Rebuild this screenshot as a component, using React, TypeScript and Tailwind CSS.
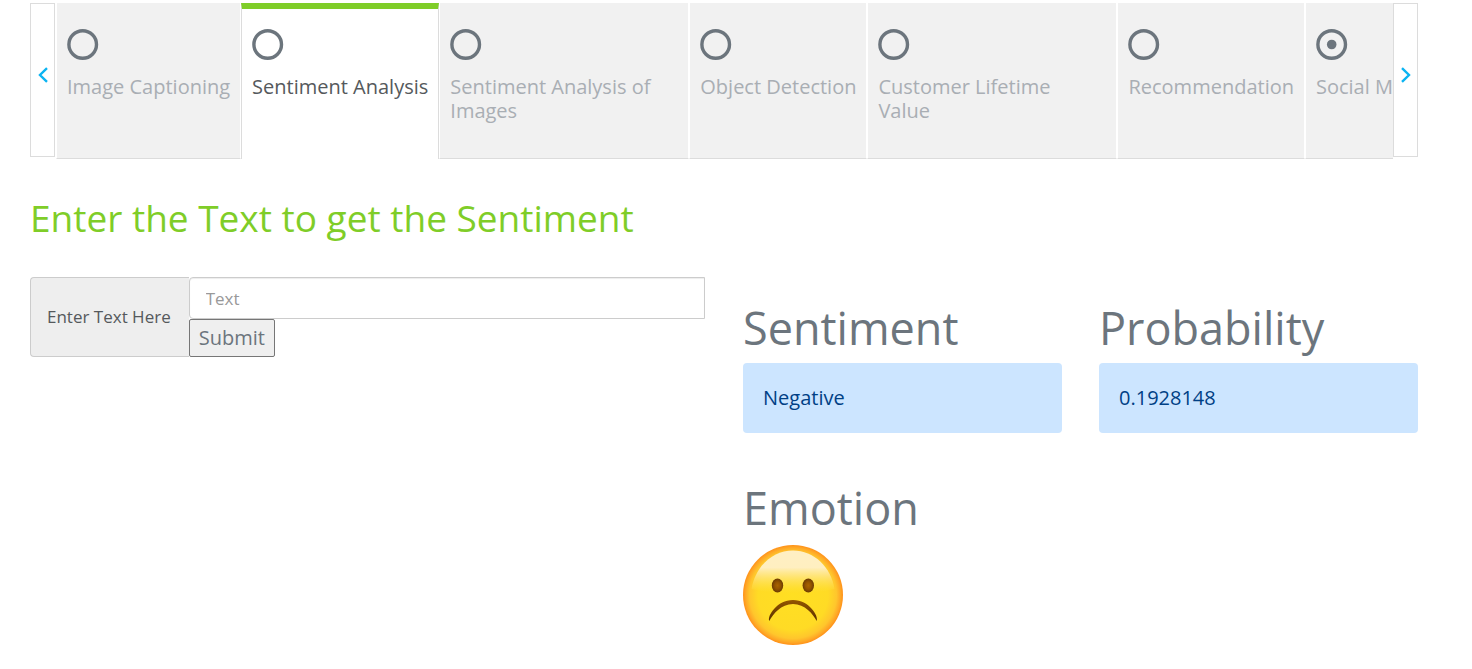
import { useState, type FormEvent } from "react";

type Tab = { label: string; dotted?: boolean };

const TABS: Tab[] = [
  { label: "Image Captioning" },
  { label: "Sentiment Analysis" },
  { label: "Sentiment Analysis of Images" },
  { label: "Object Detection" },
  { label: "Customer Lifetime Value" },
  { label: "Recommendation" },
  { label: "Social Media", dotted: true },
];

function TabIcon({ dotted }: { dotted?: boolean }) {
  return (
    <svg viewBox="0 0 32 32" className="size-8 shrink-0 text-[#6c757d]" aria-hidden="true">
      <circle cx="15.700" cy="16.500" r="13.800" fill="none" stroke="currentColor" strokeWidth="3.400" />
      {dotted && <circle cx="15.700" cy="16.500" r="4.800" fill="currentColor" />}
    </svg>
  );
}

function ScrollButton({ direction }: { direction: "left" | "right" }) {
  return (
    <button
      type="button"
      aria-label={direction === "left" ? "Previous tabs" : "Next tabs"}
      className="flex h-[154px] w-[25px] shrink-0 items-center justify-center border border-[#dcdcdc] bg-white pb-[10px] text-[#0cb4f2]"
    >
      <svg viewBox="0 0 10 16" className="h-4 w-[10px]" fill="none" stroke="currentColor" strokeWidth="2.400" aria-hidden="true">
        <path d={direction === "left" ? "M9 1.200 2 8l7 6.800" : "M1 1.200 8 8l-7 6.800"} />
      </svg>
    </button>
  );
}

function SadFace() {
  return (
    <svg viewBox="0 0 100 100" className="size-[100px]" role="img" aria-label="Sad face">
      <defs>
        <radialGradient id="skin" cx="50%" cy="50%" r="50%">
          <stop offset="0" stopColor="#ffdf22" />
          <stop offset="0.7" stopColor="#ffdb25" />
          <stop offset="0.87" stopColor="#ffc62c" />
          <stop offset="0.95" stopColor="#ffa826" />
          <stop offset="1" stopColor="#ff9119" />
        </radialGradient>
        <linearGradient id="shine" x1="0" y1="0" x2="0" y2="1">
          <stop offset="0" stopColor="#ffefc4" />
          <stop offset="0.4" stopColor="#ffefc0" />
          <stop offset="0.6" stopColor="#ffe78c" stopOpacity="0.8" />
          <stop offset="0.85" stopColor="#ffe04a" stopOpacity="0.5" />
          <stop offset="1" stopColor="#ffdc28" stopOpacity="0.1" />
        </linearGradient>
        <radialGradient id="eye">
          <stop offset="0" stopColor="#a96400" />
          <stop offset="0.5" stopColor="#945400" />
          <stop offset="1" stopColor="#6b3b03" />
        </radialGradient>
        <linearGradient id="mouth" x1="0" y1="0" x2="0" y2="1">
          <stop offset="0" stopColor="#935500" />
          <stop offset="1" stopColor="#5a3000" />
        </linearGradient>
      </defs>
      <circle cx="50" cy="50" r="50" fill="url(#skin)" />
      <path d="M50 5.500C29 5.500 12 22 8.500 44 22 47 36 48 50 48s28-1 41.500-4C88 22 71 5.500 50 5.500Z" fill="url(#shine)" />
      <ellipse cx="34.500" cy="40.500" rx="5.700" ry="7" fill="url(#eye)" />
      <ellipse cx="65.300" cy="40.500" rx="5.700" ry="7" fill="url(#eye)" />
      <path d="M26.300 76C24 71 34 55 50 55s26 16 23.700 21C70 69 62 59 50 59S30 69 26.300 76Z" fill="url(#mouth)" />
    </svg>
  );
}

function Result({ title, value }: { title: string; value: string }) {
  return (
    <section>
      <h2 className="text-[45px] leading-[54px] text-[#6c757d]">{title}</h2>
      <p className="mt-2 rounded bg-[#cce5ff] px-5 py-5 text-xl leading-[30px] text-[#004085]">{value}</p>
    </section>
  );
}

export default function App() {
  const [active, setActive] = useState(1);
  const [text, setText] = useState("");
  const submit = (event: FormEvent) => event.preventDefault();

  return (
    <main className="bg-white pt-[3px] pr-[54px] pl-[30px] font-['Open_Sans',sans-serif]">
      <nav className="flex items-start" aria-label="Models">
        <ScrollButton direction="left" />
        <div role="tablist" className="flex h-[156px] min-w-0 flex-1 overflow-hidden pl-px">
          {TABS.map((tab, index) => (
            <button
              key={tab.label}
              type="button"
              role="tab"
              aria-selected={index === active}
              onClick={() => setActive(index)}
              className={
                index === active
                  ? "flex max-w-[250px] shrink-0 flex-col items-start border-x border-t-6 border-x-[#dcdcdc] border-t-[#7fcd28] bg-white px-[10px] pt-[19px] text-left text-xl leading-6 text-[#55595c]"
                  : "flex max-w-[250px] shrink-0 flex-col items-start border-x border-b border-x-white border-b-[#dcdcdc] bg-[#f1f1f1] px-[10px] pt-[25px] text-left text-xl leading-6 text-[#a9aeb4]"
              }
            >
              <TabIcon dotted={tab.dotted} />
              <span className="mt-[15px]">{tab.label}</span>
            </button>
          ))}
        </div>
        <ScrollButton direction="right" />
      </nav>

      <h1 className="mt-[34px] text-[37px] leading-[50px] text-[#7fcd28]">Enter the Text to get the Sentiment</h1>

      <div className="mt-[34px] grid grid-cols-[675fr_675fr] gap-[38px]">
        <form onSubmit={submit} className="flex items-stretch self-start">
          <label
            htmlFor="sentiment-text"
            className="flex shrink-0 items-center rounded-l border border-r-0 border-[#ccc] bg-[#eee] pr-[18px] pl-4 text-[17px] text-[#55595c]"
          >
            Enter Text Here
          </label>
          <div className="flex min-w-0 flex-1 flex-col items-start">
            <input
              id="sentiment-text"
              type="text"
              placeholder="Text"
              value={text}
              onChange={(event) => setText(event.target.value)}
              className="h-[42px] w-full rounded-l border border-[#ccc] bg-white px-4 text-[17px] text-[#55595c] shadow-[inset_0_1px_1px_rgba(0,0,0,0.075)] placeholder:text-[#999]"
            />
            <button
              type="submit"
              className="h-[38px] rounded-xs border border-[#767676] bg-[#efefef] px-[9px] text-xl text-[#6c757d]"
            >
              Submit
            </button>
          </div>
        </form>

        <div className="grid grid-cols-2 gap-x-[37px] gap-y-12 pt-6">
          <Result title="Sentiment" value="Negative" />
          <Result title="Probability" value="0.1928148" />
          <section>
            <h2 className="mb-[10px] text-[45px] leading-[54px] text-[#6c757d]">Emotion</h2>
            <SadFace />
          </section>
        </div>
      </div>
    </main>
  );
}
